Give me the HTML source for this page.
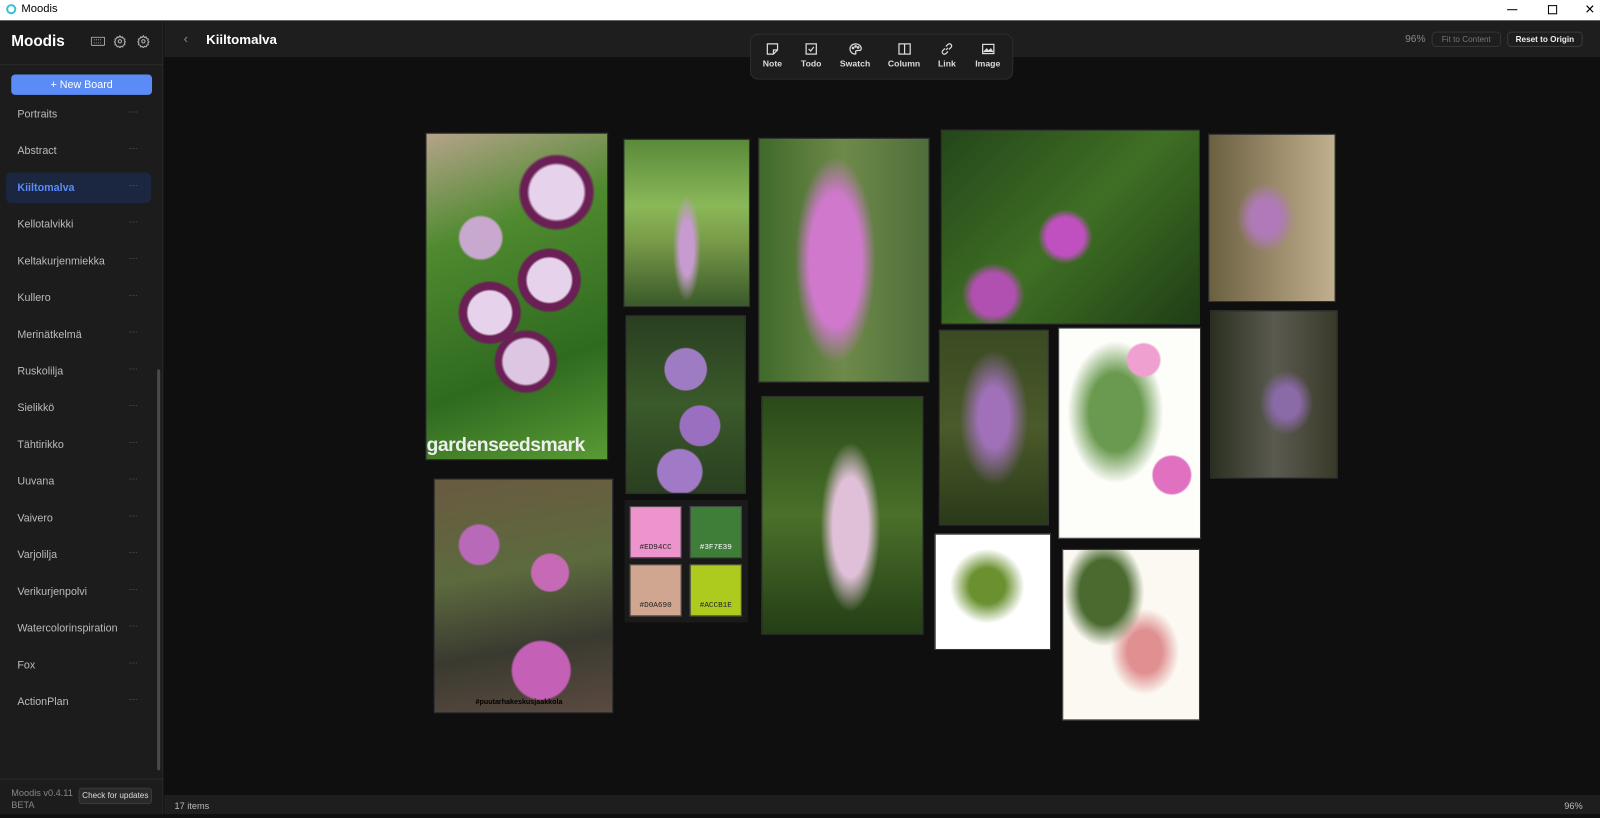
<!DOCTYPE html>
<html><head><meta charset="utf-8"><style>
*{margin:0;padding:0;box-sizing:border-box}
body{width:1600px;height:818px;background:#0f0f0f;font-family:"Liberation Sans",sans-serif;position:relative;overflow:hidden;color:#ddd}
#w{position:absolute;left:0;top:0;width:1568px;height:802px;transform:scale(1.0204);transform-origin:0 0}
.a{position:absolute}
.tb{left:0;top:0;width:1568px;height:20px;background:#fff;color:#000;font-size:11px}
.side{left:0;top:20px;width:160px;height:782px;background:#1c1c1c;border-right:1px solid #2a2a2a}
.it{position:absolute;left:17px;font-size:10.5px;color:#bbb}
.dots{position:absolute;left:126px;font-size:9px;color:#666}
.ph{position:absolute;border:1px solid #333}
.sw{position:absolute;width:51px;height:51px;border:1px solid #444;font-family:"Liberation Mono",monospace;font-size:7.5px;text-align:center;padding-top:36px}
.tool{position:absolute;top:42px;text-align:center;font-size:8.5px;font-weight:bold;color:#ddd;width:40px}
.tool svg{display:block;margin:0 auto 3px}
</style></head><body><div id="w">
<div class="a tb"><span style="position:absolute;left:6px;top:4px;width:10px;height:10px;border-radius:50%;border:2px solid #3ac0d8"></span><span style="position:absolute;left:21px;top:3px">Moodis</span>
<span style="position:absolute;left:1477px;top:9px;width:10px;height:1px;background:#000"></span>
<span style="position:absolute;left:1517px;top:5px;width:9px;height:9px;border:1px solid #000"></span>
<span style="position:absolute;left:1553px;top:2px;font-size:12px">✕</span></div>

<div class="a side">
<div style="position:absolute;left:11px;top:12px;font-size:15px;font-weight:bold;color:#fff">Moodis</div>
<svg class="a" style="left:89px;top:16px" width="14" height="10"><rect x=".5" y=".5" width="13" height="8" rx="1" fill="none" stroke="#aaa"/><path d="M3 3h8M3 6h8" stroke="#aaa" stroke-width=".8" stroke-dasharray="1 1"/></svg>
<svg class="a" style="left:111px;top:14px" width="13" height="13" viewBox="0 0 24 24" fill="none" stroke="#aaa" stroke-width="2"><circle cx="12" cy="12" r="3"/><path d="M12 2l2 3 3-1 1 3 3 1-1 3 2 2-2 2 1 3-3 1-1 3-3-1-2 3-2-3-3 1-1-3-3-1 1-3-2-2 2-2-1-3 3-1 1-3 3 1z"/></svg>
<svg class="a" style="left:134px;top:14px" width="13" height="13" viewBox="0 0 24 24" fill="none" stroke="#aaa" stroke-width="2"><circle cx="12" cy="12" r="3"/><path d="M12 2l2 3 3-1 1 3 3 1-1 3 2 2-2 2 1 3-3 1-1 3-3-1-2 3-2-3-3 1-1-3-3-1 1-3-2-2 2-2-1-3 3-1 1-3 3 1z"/></svg>
<div style="position:absolute;left:0;top:43px;width:160px;height:1px;background:#2c2c2c"></div>
<div style="position:absolute;left:11px;top:53px;width:138px;height:20px;background:#5a8bf7;border-radius:4px;color:#fff;font-size:10.5px;text-align:center;line-height:20px">+ New Board</div>
<div style="position:absolute;left:6px;top:149px;width:142px;height:30px;background:#1b2740;border-radius:5px"></div>
<div class="it" style="top:86px">Portraits</div><div class="dots" style="top:84px">···</div>
<div class="it" style="top:122px">Abstract</div><div class="dots" style="top:120px">···</div>
<div class="it" style="top:158px;color:#5a8bf7;font-weight:bold">Kiiltomalva</div><div class="dots" style="top:156px">···</div>
<div class="it" style="top:194px">Kellotalvikki</div><div class="dots" style="top:192px">···</div>
<div class="it" style="top:230px">Keltakurjenmiekka</div><div class="dots" style="top:228px">···</div>
<div class="it" style="top:266px">Kullero</div><div class="dots" style="top:264px">···</div>
<div class="it" style="top:302px">Merinätkelmä</div><div class="dots" style="top:300px">···</div>
<div class="it" style="top:338px">Ruskolilja</div><div class="dots" style="top:336px">···</div>
<div class="it" style="top:374px">Sielikkö</div><div class="dots" style="top:372px">···</div>
<div class="it" style="top:410px">Tähtirikko</div><div class="dots" style="top:408px">···</div>
<div class="it" style="top:446px">Uuvana</div><div class="dots" style="top:444px">···</div>
<div class="it" style="top:482px">Vaivero</div><div class="dots" style="top:480px">···</div>
<div class="it" style="top:518px">Varjolilja</div><div class="dots" style="top:516px">···</div>
<div class="it" style="top:554px">Verikurjenpolvi</div><div class="dots" style="top:552px">···</div>
<div class="it" style="top:590px">Watercolorinspiration</div><div class="dots" style="top:588px">···</div>
<div class="it" style="top:626px">Fox</div><div class="dots" style="top:624px">···</div>
<div class="it" style="top:662px">ActionPlan</div><div class="dots" style="top:660px">···</div>
<div style="position:absolute;left:154px;top:342px;width:3px;height:393px;background:#4a4a4a;border-radius:2px"></div>
<div style="position:absolute;left:0;top:743px;width:160px;height:1px;background:#2c2c2c"></div>
<div style="position:absolute;left:11px;top:751px;font-size:9px;color:#888;line-height:12px">Moodis v0.4.11<br>BETA</div>
<div style="position:absolute;left:77px;top:752px;width:72px;height:16px;background:#2a2a2a;border:1px solid #3a3a3a;border-radius:3px;font-size:8px;color:#ddd;text-align:center;line-height:14px">Check for updates</div>
</div>

<div class="a" style="left:161px;top:20px;width:1407px;height:36px;background:#1e1e1e"></div>
<div class="a" style="left:180px;top:30px;font-size:13px;color:#888">‹</div>
<div class="a" style="left:202px;top:31px;font-size:13px;font-weight:bold;color:#fff">Kiiltomalva</div>
<div class="a" style="left:1377px;top:33px;font-size:10px;color:#888">96%</div>
<div class="a" style="left:1403px;top:31px;width:68px;height:15px;border:1px solid #333;border-radius:4px;font-size:8px;color:#777;text-align:center;line-height:13px">Fit to Content</div>
<div class="a" style="left:1477px;top:31px;width:74px;height:15px;border:1px solid #3a3a3a;border-radius:4px;font-size:8px;color:#eee;font-weight:bold;text-align:center;line-height:13px">Reset to Origin</div>

<div class="a" style="left:735px;top:33px;width:258px;height:45px;background:#1d1d1d;border:1px solid #2d2d2d;border-radius:8px"></div>
<div class="tool" style="left:737px"><svg width="12" height="12" viewBox="0 0 12 12" fill="none" stroke="#ddd" stroke-width="1.2"><path d="M1 1h10v6l-4 4H1z M7 11V7h4"/></svg>Note</div>
<div class="tool" style="left:775px"><svg width="12" height="12" viewBox="0 0 12 12" fill="none" stroke="#ddd" stroke-width="1.2"><rect x="1" y="1" width="10" height="10"/><path d="M3.5 6l2 2 3-4"/></svg>Todo</div>
<div class="tool" style="left:818px"><svg width="13" height="12" viewBox="0 0 13 12" fill="none" stroke="#ddd" stroke-width="1.2"><path d="M6.5 1C3 1 1 3.5 1 6s2 5 5 5c1 0 1-1 .5-1.8S7 7.5 8 7.5h2c1.5 0 2-1 2-2C12 3 9.5 1 6.5 1z"/><circle cx="4" cy="5" r=".7"/><circle cx="6.5" cy="3.5" r=".7"/><circle cx="9" cy="4.5" r=".7"/></svg>Swatch</div>
<div class="tool" style="left:866px"><svg width="13" height="12" viewBox="0 0 13 12" fill="none" stroke="#ddd" stroke-width="1.2"><rect x="1" y="1" width="11" height="10"/><path d="M6.5 1v10"/></svg>Column</div>
<div class="tool" style="left:908px"><svg width="12" height="12" viewBox="0 0 12 12" fill="none" stroke="#ddd" stroke-width="1.2"><path d="M5 7l2-2M4 5.5l-2 2a2 2 0 003 3l2-2M8 6.5l2-2a2 2 0 00-3-3l-2 2"/></svg>Link</div>
<div class="tool" style="left:948px"><svg width="13" height="12" viewBox="0 0 13 12" fill="none" stroke="#ddd" stroke-width="1.2"><rect x="1" y="1.5" width="11" height="9"/><path d="M2 9l3-3 2 2 2-2 2 3" fill="#ddd"/></svg>Image</div>

<div class="ph" style="left:417px;top:130px;width:179px;height:321px;background:radial-gradient(circle at 72% 18%,#e6d2ea 0 9%,#6a1f55 10% 12%,transparent 13%),radial-gradient(circle at 68% 45%,#e6d2ea 0 10%,#6a1f55 11% 14%,transparent 15%),radial-gradient(circle at 35% 55%,#e6d2ea 0 10%,#6a1f55 11% 14%,transparent 15%),radial-gradient(circle at 55% 70%,#dcc6e2 0 9%,#6a1f55 10% 12%,transparent 13%),radial-gradient(circle at 30% 32%,#c9a8cf 0 8%,transparent 9%),linear-gradient(160deg,#b5a38a,#4f8a2f 30%,#2f6a20 70%,#5a9a34)"><div style="position:absolute;left:0;bottom:2px;font-size:19px;font-weight:bold;color:#eee;letter-spacing:-.5px">gardenseedsmark</div></div>
<div class="ph" style="left:425px;top:469px;width:176px;height:230px;background:radial-gradient(circle at 25% 28%,#b86ab8 0 9%,transparent 10%),radial-gradient(circle at 65% 40%,#c76ab6 0 10%,transparent 11%),radial-gradient(circle at 60% 82%,#c460b6 0 13%,transparent 14%),linear-gradient(170deg,#6a5a40,#5c6a3e 40%,#3a3a30 70%,#5b4a40)"><div style="position:absolute;left:40px;bottom:6px;font-size:7px;color:#000;font-weight:bold">#puutarhakeskusjaakkola</div></div>
<div class="ph" style="left:611px;top:136px;width:124px;height:165px;background:radial-gradient(ellipse 14% 40% at 50% 65%,#c89bd0 0 40%,transparent 80%),linear-gradient(180deg,#5a8a3a,#8ab858 40%,#7a9c4a 60%,#3a5a2a)"></div>
<div class="ph" style="left:613px;top:309px;width:118px;height:175px;background:radial-gradient(circle at 50% 30%,#9f7bc4 0 15%,transparent 16%),radial-gradient(circle at 62% 62%,#9b6fc0 0 15%,transparent 16%),radial-gradient(circle at 45% 88%,#a07ac6 0 13%,transparent 14%),linear-gradient(#2a3f20,#3a5a2a,#2a3f20)"></div>
<div class="a" style="left:612px;top:490px;width:121px;height:120px;background:#1a1a1a"></div>
<div class="sw" style="left:617px;top:496px;background:#ED94CC;color:#222">#ED94CC</div>
<div class="sw" style="left:676px;top:496px;background:#3F7E39;color:#fff">#3F7E39</div>
<div class="sw" style="left:617px;top:553px;background:#D0A690;color:#222">#D0A690</div>
<div class="sw" style="left:676px;top:553px;background:#ACCB1E;color:#222">#ACCB1E</div>
<div class="ph" style="left:743px;top:135px;width:168px;height:240px;background:radial-gradient(ellipse 28% 50% at 45% 50%,#cf78cc 0 55%,transparent 85%),linear-gradient(90deg,#3f6a2a,#6e8a4a 50%,#4f6d3a)"></div>
<div class="ph" style="left:746px;top:388px;width:159px;height:234px;background:radial-gradient(ellipse 22% 42% at 55% 55%,#e0c0d8 0 50%,transparent 85%),linear-gradient(#2a4a18,#4a702a 50%,#243e16)"></div>
<div class="ph" style="left:922px;top:127px;width:254px;height:191px;background:radial-gradient(circle at 48% 55%,#c050c0 0 11%,transparent 16%),radial-gradient(circle at 20% 85%,#b050b0 0 8%,transparent 12%),linear-gradient(135deg,#24461a,#3f6f24 50%,#1f3e16)"></div>
<div class="ph" style="left:1184px;top:131px;width:125px;height:165px;background:radial-gradient(ellipse at 45% 50%,#b07ab8 0 15%,transparent 30%),linear-gradient(90deg,#6a6040,#a09070 60%,#c0b090)"></div>
<div class="ph" style="left:1186px;top:304px;width:125px;height:165px;background:radial-gradient(ellipse at 60% 55%,#8b6aa8 0 12%,transparent 25%),linear-gradient(90deg,#2a3020,#5a5a50 50%,#3a3a2a)"></div>
<div class="ph" style="left:920px;top:323px;width:108px;height:192px;background:radial-gradient(ellipse at 50% 45%,#a070b8 0 20%,transparent 45%),linear-gradient(#3a4a22,#4a5a2a 50%,#2a3a1a)"></div>
<div class="ph" style="left:1037px;top:321px;width:140px;height:207px;background:radial-gradient(circle at 60% 15%,#f0a0d0 0 8%,transparent 9%),radial-gradient(circle at 80% 70%,#e070c0 0 10%,transparent 11%),radial-gradient(ellipse at 40% 40%,#6a9a50 0 22%,transparent 40%),#fdfdfa"></div>
<div class="ph" style="left:916px;top:523px;width:114px;height:114px;background:radial-gradient(ellipse at 45% 45%,#6a9030 0 20%,transparent 42%),#fff"></div>
<div class="ph" style="left:1041px;top:538px;width:135px;height:168px;background:radial-gradient(ellipse at 30% 25%,#4a6a30 0 18%,transparent 30%),radial-gradient(ellipse at 60% 60%,#e09090 0 15%,transparent 30%),#fbf9f2"></div>

<div class="a" style="left:161px;top:779px;width:1407px;height:19px;background:#1e1e1e"></div>
<div class="a" style="left:171px;top:785px;font-size:9px;color:#bbb">17 items</div>
<div class="a" style="left:1533px;top:785px;font-size:9px;color:#bbb">96%</div>
<div class="a" style="left:0;top:798px;width:1568px;height:4px;background:#0f0f0f"></div>
</div></body></html>
